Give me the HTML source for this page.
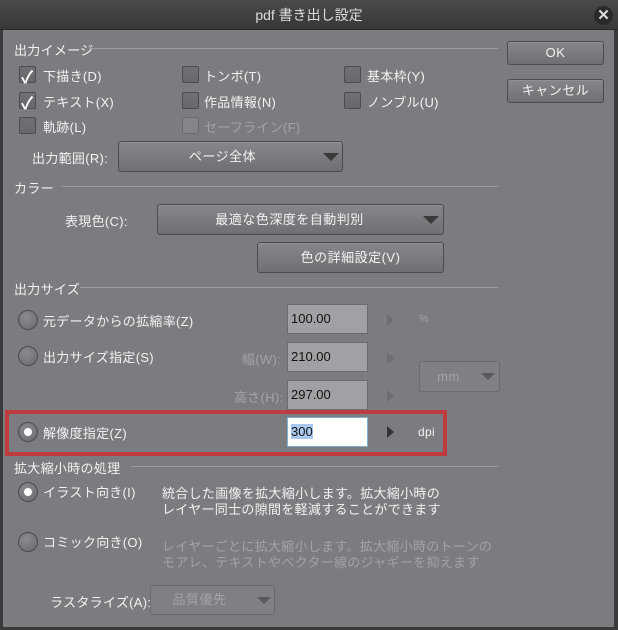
<!DOCTYPE html>
<html><head><meta charset="utf-8"><style>
*{margin:0;padding:0;box-sizing:border-box}
body{width:618px;height:630px;background:#333;overflow:hidden;font-family:"Liberation Sans","Noto Sans CJK JP",sans-serif;font-size:13px;color:#f2f2f2}
#win{position:absolute;left:0;top:0;width:618px;height:630px;background:#7b7c7f;border-left:3px solid #3a3a3a;border-right:4px solid #3a3a3a;border-bottom:3px solid #3a3a3a}
#title{position:absolute;left:0;top:0;width:618px;height:30px;background:linear-gradient(#4a4a4a,#383838);border-bottom:1px solid #2a2a2a;color:#ddd;text-align:center;line-height:30px;font-size:14px}
#close{position:absolute;left:594px;top:6px;width:19px;height:19px;border-radius:50%;background:#2a2a2a;color:#ddd;font-size:15px;font-weight:bold;line-height:19px;text-align:center}
.a{position:absolute;white-space:nowrap;letter-spacing:0.3px}
.hd{position:absolute;left:0;height:1px;background:#9a9b9e}
.cb{position:absolute;width:17px;height:17px;border:1px solid #4b4c4f;border-radius:2px;background:linear-gradient(#707174,#67686b)}
.cb.dis{border-color:#6a6b6e;background:#848588}
.ck{position:absolute;left:1px;top:-4px;font-size:17px;color:#fff;font-weight:bold}
.btn{position:absolute;border:1px solid #4b4c4f;border-radius:3px;background:linear-gradient(#86878a,#6f7073);box-shadow:inset 0 1px 0 #909194;text-align:center;color:#f2f2f2;letter-spacing:0.5px}
.tri{position:absolute;width:0;height:0;border-left:8px solid transparent;border-right:8px solid transparent;border-top:8px solid #3a3a3a}
.rad{position:absolute;width:20px;height:20px;border-radius:50%;border:1px solid #4b4c4f;background:radial-gradient(circle at 40% 35%,#8a8b8e,#68696c)}
.dot{position:absolute;left:5px;top:5px;width:8px;height:8px;border-radius:50%;background:#fff}
.inp{position:absolute;width:81px;height:30px;background:#a0a1a4;border:1px solid #6a6b6e;color:#111;padding-left:3px;line-height:28px;font-size:13px}
.arr{position:absolute;width:0;height:0;border-top:6px solid transparent;border-bottom:6px solid transparent;border-left:7px solid #6d6e71}
.dis{color:#a2a3a6}
</style></head><body>
<div id="win"></div>
<div id="title">pdf 書き出し設定</div>
<div id="close">✕</div>

<div class="a" style="left:14px;top:40px">出力イメージ</div>
<div class="hd" style="left:89px;top:48px;width:409px"></div>

<div class="cb" style="left:19px;top:66px"><span class="ck">✓</span></div><div class="a" style="left:43px;top:66px">下描き(D)</div>
<div class="cb" style="left:182px;top:66px"></div><div class="a" style="left:204px;top:66px">トンボ(T)</div>
<div class="cb" style="left:344px;top:66px"></div><div class="a" style="left:367px;top:66px">基本枠(Y)</div>
<div class="cb" style="left:19px;top:92px"><span class="ck">✓</span></div><div class="a" style="left:43px;top:92px">テキスト(X)</div>
<div class="cb" style="left:182px;top:92px"></div><div class="a" style="left:204px;top:92px">作品情報(N)</div>
<div class="cb" style="left:344px;top:92px"></div><div class="a" style="left:367px;top:92px">ノンブル(U)</div>
<div class="cb" style="left:19px;top:117px"></div><div class="a" style="left:43px;top:117px">軌跡(L)</div>
<div class="cb dis" style="left:182px;top:117px"></div><div class="a dis" style="left:204px;top:117px">セーフライン(F)</div>

<div class="a" style="left:32px;top:148px">出力範囲(R):</div>
<div class="btn" style="left:118px;top:141px;width:225px;height:31px;line-height:29px;padding-right:16px">ページ全体</div>
<div class="tri" style="left:323px;top:153px"></div>

<div class="a" style="left:14px;top:178px">カラー</div>
<div class="hd" style="left:62px;top:186px;width:436px"></div>
<div class="a" style="left:65px;top:211px">表現色(C):</div>
<div class="btn" style="left:157px;top:204px;width:287px;height:31px;line-height:29px;padding-right:22px">最適な色深度を自動判別</div>
<div class="tri" style="left:423px;top:216px"></div>
<div class="btn" style="left:257px;top:242px;width:187px;height:31px;line-height:29px">色の詳細設定(V)</div>

<div class="a" style="left:14px;top:279px">出力サイズ</div>
<div class="hd" style="left:80px;top:287px;width:418px"></div>

<div class="rad" style="left:18px;top:310px"></div><div class="a" style="left:43px;top:311px">元データからの拡縮率(Z)</div>
<div class="inp" style="left:287px;top:304px">100.00</div><div class="arr" style="left:387px;top:314px"></div><div class="a dis" style="left:419px;top:313px;font-size:11px">%</div>
<div class="rad" style="left:18px;top:346px"></div><div class="a" style="left:43px;top:347px">出力サイズ指定(S)</div>
<div class="a dis" style="left:242px;top:349px">幅(W):</div>
<div class="inp" style="left:287px;top:342px">210.00</div><div class="arr" style="left:387px;top:352px"></div>
<div class="a dis" style="left:234px;top:387px">高さ(H):</div>
<div class="inp" style="left:287px;top:380px">297.00</div><div class="arr" style="left:387px;top:390px"></div>
<div class="btn" style="left:419px;top:361px;width:81px;height:31px;line-height:29px;padding-right:22px;color:#a2a3a6;background:#7f8083;box-shadow:none;border-color:#6a6b6e">mm</div>
<div class="tri" style="left:481px;top:373px;border-top-color:#5a5b5e;border-left-width:7px;border-right-width:7px;border-top-width:7px"></div>

<div class="a" style="left:5px;top:410px;width:442px;height:46px;border:4px solid #bf3b3d"></div>
<div class="rad" style="left:18px;top:422px"><div class="dot"></div></div><div class="a" style="left:43px;top:423px">解像度指定(Z)</div>
<div class="inp" style="left:287px;top:417px;background:#fff;border-color:#7fb2d2"><span style="background:#a8c8f0">300</span></div>
<div class="arr" style="left:387px;top:426px;border-left-color:#333"></div>
<div class="a" style="left:418px;top:425px;font-size:12px">dpi</div>

<div class="a" style="left:14px;top:458px">拡大縮小時の処理</div>
<div class="hd" style="left:131px;top:466px;width:367px"></div>
<div class="rad" style="left:18px;top:482px"><div class="dot"></div></div><div class="a" style="left:43px;top:482px">イラスト向き(I)</div>
<div class="a" style="left:162px;top:486px;line-height:16px">統合した画像を拡大縮小します。拡大縮小時の<br>レイヤー同士の隙間を軽減することができます</div>
<div class="rad" style="left:18px;top:532px"></div><div class="a" style="left:43px;top:532px">コミック向き(O)</div>
<div class="a dis" style="left:162px;top:539px;line-height:16px">レイヤーごとに拡大縮小します。拡大縮小時のトーンの<br>モアレ、テキストやベクター線のジャギーを抑えます</div>
<div class="a" style="left:50px;top:592px">ラスタライズ(A):</div>
<div class="btn" style="left:150px;top:585px;width:125px;height:30px;line-height:28px;padding-right:26px;color:#a2a3a6;background:#7f8083;box-shadow:none;border-color:#6a6b6e">品質優先</div>
<div class="tri" style="left:257px;top:597px;border-top-color:#5a5b5e;border-left-width:7px;border-right-width:7px;border-top-width:7px"></div>

<div class="btn" style="left:507px;top:41px;width:97px;height:24px;line-height:22px">OK</div>
<div class="btn" style="left:507px;top:79px;width:97px;height:24px;line-height:22px">キャンセル</div>
</body></html>
